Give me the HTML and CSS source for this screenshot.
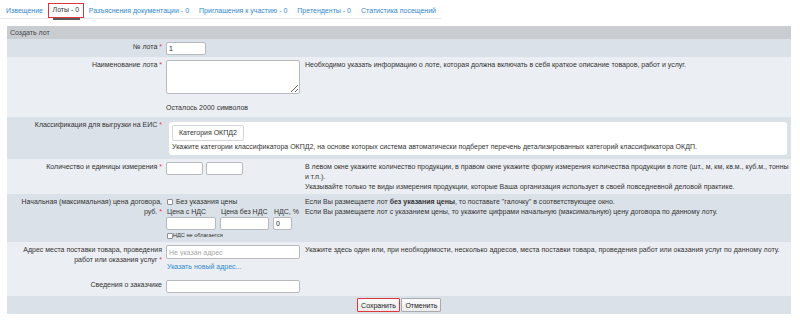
FILE: index.html
```html
<!DOCTYPE html>
<html lang="ru">
<head>
<meta charset="utf-8">
<title>Создать лот</title>
<link rel="stylesheet" href="styles.css">
</head>
<body>
<nav class="tabs">
  <a class="tab" href="#">Извещение</a>
  <a class="tab active" href="#">Лоты - 0</a>
  <a class="tab" href="#">Разъяснения документации - 0</a>
  <a class="tab" href="#">Приглашения к участию - 0</a>
  <a class="tab" href="#">Претенденты - 0</a>
  <a class="tab" href="#">Статистика посещений</a>
</nav>

<div class="panel">
  <div class="head">Создать лот</div>

  <div class="row dark">
    <div class="lbl">№ лота <span class="req">*</span></div>
    <div class="ctl"><input class="in w40" value="1"></div>
    <div class="desc"></div>
  </div>

  <div class="row light">
    <div class="lbl">Наименование лота <span class="req">*</span></div>
    <div class="ctl">
      <textarea class="ta"></textarea>
      <div class="remain">Осталось 2000 символов</div>
    </div>
    <div class="desc">Необходимо указать информацию о лоте, которая должна включать в себя краткое описание товаров, работ и услуг.</div>
  </div>

  <div class="row dark">
    <div class="lbl">Классификация для выгрузки на ЕИС <span class="req">*</span></div>
    <div class="catbox">
      <button class="btn-cat" type="button">Категория ОКПД2</button>
      <div class="cat-hint">Укажите категории классификатора ОКПД2, на основе которых система автоматически подберет перечень детализированных категорий классификатора ОКДП.</div>
    </div>
  </div>

  <div class="row light">
    <div class="lbl">Количество и единицы измерения <span class="req">*</span></div>
    <div class="ctl pair">
      <input class="in w37">
      <input class="in w37">
    </div>
    <div class="desc">В левом окне укажите количество продукции, в правом окне укажите форму измерения количества продукции в лоте (шт., м, км, кв.м., куб.м., тонны и т.п.).<br>Указывайте только те виды измерения продукции, которые Ваша организация использует в своей повседневной деловой практике.</div>
  </div>

  <div class="row dark">
    <div class="lbl">Начальная (максимальная) цена договора,<br>руб. <span class="req">*</span></div>
    <div class="ctl">
      <label class="cbline"><input type="checkbox" class="cb"> Без указания цены</label>
      <div class="price">
        <span>Цена с НДС</span>
        <span>Цена без НДС</span>
        <span>НДС, %</span>
        <input class="in w50">
        <input class="in w49">
        <input class="in w19" value="0">
      </div>
      <label class="cbsmall"><input type="checkbox" class="cb">НДС не облагается</label>
    </div>
    <div class="desc">Если Вы размещаете лот <b>без указания цены</b>, то поставьте "галочку" в соответствующее окно.<br>Если Вы размещаете лот с указанием цены, то укажите цифрами начальную (максимальную) цену договора по данному лоту.</div>
  </div>

  <div class="row light">
    <div class="lbl">Адрес места поставки товара, проведения<br>работ или оказания услуг <span class="req">*</span></div>
    <div class="ctl">
      <input class="in w134 h14" placeholder="Не указан адрес">
      <a class="link" href="#">Указать новый адрес...</a>
    </div>
    <div class="desc">Укажите здесь один или, при необходимости, несколько адресов, места поставки товара, проведения работ или оказания услуг по данному лоту.</div>
  </div>

  <div class="row light last">
    <div class="lbl">Сведения о заказчике</div>
    <div class="ctl"><input class="in w134"></div>
    <div class="desc"></div>
  </div>

  <div class="foot">
    <button class="btn save" type="button">Сохранить</button>
    <button class="btn" type="button">Отменить</button>
  </div>
</div>
</body>
</html>
```

FILE: styles.css
```css
body {
  margin: 0;
  font-family: "Liberation Sans", Arial, sans-serif;
  font-size: 7px;
  color: #333;
  background: #fff;
}

/* tabs */
.tabs {
  display: flex;
  width: fit-content;
  padding: 3px 0 0 1px;
  border-bottom: 1px solid #e6e8eb;
}
.tab {
  position: relative;
  box-sizing: border-box;
  height: 15px;
  line-height: 15px;
  padding: 0 5px;
  color: #3189d0;
  text-decoration: none;
  white-space: nowrap;
}
.tab.active {
  color: #333;
  border: 1.5px solid #e0363b;
  line-height: 12px;
  padding: 0 3.5px;
}
.tab.active::after {
  content: "";
  position: absolute;
  left: 3.5px;
  right: 3px;
  bottom: -2.5px;
  height: 2px;
  background: #5c5c5c;
}

/* panel */
.panel {
  margin: 7px 9px 0 7px;
}
.head {
  height: 13px;
  line-height: 13px;
  padding-left: 3px;
  background: #c9cdd2;
  color: #444;
}
.row {
  display: grid;
  grid-template-columns: 159px 139px 1fr;
  padding: 3px 0 2px;
  line-height: 10px;
}
.row.dark { background: #dbe1e8; }
.row.light { background: #ebeef2; }
.row.last { padding-bottom: 3px; }

.lbl {
  text-align: right;
  padding-right: 4px;
}
.req { color: #e03a3a; }
.desc { padding-right: 2px; }

.in {
  display: block;
  box-sizing: border-box;
  height: 13px;
  margin: 0;
  padding: 0 2px;
  border: 1px solid #b7bbc0;
  border-radius: 2px;
  background: #fff;
  font: inherit;
  color: #222;
  outline: none;
}
.in::placeholder { color: #a8a8a8; }
.w19 { width: 19px; }
.w37 { width: 37px; }
.w40 { width: 40px; }
.w49 { width: 49px; }
.w50 { width: 50px; }
.w134 { width: 134px; }
.h14 { height: 14px; }

.ta {
  display: block;
  box-sizing: border-box;
  width: 134px;
  height: 34px;
  margin: 0;
  border: 1px solid #b7bbc0;
  border-radius: 2px;
  background: #fff;
  font: inherit;
}
.remain {
  margin: 9px 0 2px 0;
}

/* classification */
.catbox {
  grid-column: 2 / 4;
  margin: 2px 4px 2px 3px;
  padding: 3px;
  background: #fff;
  border-radius: 3px;
}
.btn-cat {
  display: block;
  box-sizing: border-box;
  height: 16px;
  padding: 0 6px;
  border: 1px solid #d3d7dc;
  border-radius: 2px;
  background: #fff;
  font: inherit;
  color: #333;
}
.cat-hint { margin-top: 1px; }

.pair {
  display: flex;
  gap: 3px;
}

/* price */
.cbline {
  display: flex;
  align-items: center;
  gap: 3px;
  padding-left: 1px;
}
.cb {
  appearance: none;
  -webkit-appearance: none;
  box-sizing: border-box;
  width: 6px;
  height: 6px;
  margin: 0;
  border: 1px solid #8d9196;
  border-radius: 1px;
  background: #fff;
}
.price {
  display: grid;
  grid-template-columns: 54px 53px 20px;
}
.price span {
  padding-left: 1px;
  white-space: nowrap;
}
.cbsmall {
  display: flex;
  align-items: center;
  margin: 2px 0 1px 1px;
  font-size: 5.6px;
  line-height: 7px;
}

.link {
  display: block;
  margin: 3px 0 3px 1px;
  color: #3189d0;
  text-decoration: none;
}

/* footer */
.foot {
  display: flex;
  justify-content: center;
  gap: 1px;
  padding: 2px 0;
  background: #dbe1e8;
}
.btn {
  box-sizing: border-box;
  height: 14px;
  padding: 0 3px;
  border: 1px solid #a9abae;
  border-radius: 1px;
  background: linear-gradient(#fbfbfb, #ebebeb);
  font: inherit;
  color: #222;
}
.btn.save {
  border: 1.5px solid #e0363b;
  padding: 0 3.5px;
}
```
